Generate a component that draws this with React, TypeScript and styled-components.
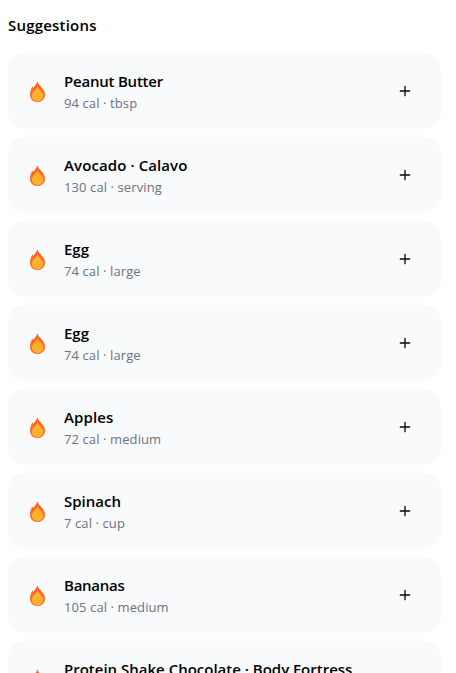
import React from "react";
import styled, { createGlobalStyle } from "styled-components";

const Global = createGlobalStyle`
  * { box-sizing: border-box; }
  html, body { margin: 0; height: 100%; overflow: hidden; background: #fff; }
  body { font-family: "Open Sans", "Noto Sans", sans-serif; color: #000; }
`;

const Page = styled.main`
  height: 673px;
  overflow: hidden;
  padding: 11px 15px 0 8px;
`;

const Heading = styled.h2`
  margin: 0 0 14px;
  font-size: 15px;
  line-height: 28px;
  font-weight: 600;
  letter-spacing: 0.2px;
`;

const List = styled.ul`
  list-style: none;
  margin: 0;
  padding: 0;
  display: flex;
  flex-direction: column;
  gap: 8px;
`;

const Card = styled.li`
  display: flex;
  align-items: center;
  height: 76px;
  flex: none;
  padding: 0 28px 0 20px;
  border-radius: 16px;
  background: #f9fafc;
`;

const Flame = styled.svg`
  width: 18px;
  height: 22px;
  margin-right: 18px;
  flex: none;
`;

const Info = styled.div`
  flex: 1;
  white-space: nowrap;
`;

const Name = styled.div<{ $tracking: number }>`
  font-size: 15px;
  line-height: 24px;
  font-weight: 600;
  letter-spacing: ${(p) => p.$tracking}px;
`;

const Detail = styled.div`
  font-size: 13px;
  line-height: 20px;
  color: #6b7280;
  letter-spacing: 0.1px;
`;

const AddButton = styled.button`
  display: flex;
  padding: 0;
  border: 0;
  background: none;
  color: #09090b;
`;

const foods: { name: string; detail: string; tracking?: number }[] = [
  { name: "Peanut Butter", detail: "94 cal · tbsp", tracking: -0.22 },
  { name: "Avocado · Calavo", detail: "130 cal · serving", tracking: 0.1 },
  { name: "Egg", detail: "74 cal · large" },
  { name: "Egg", detail: "74 cal · large" },
  { name: "Apples", detail: "72 cal · medium", tracking: 0.1 },
  { name: "Spinach", detail: "7 cal · cup" },
  { name: "Bananas", detail: "105 cal · medium", tracking: -0.25 },
  { name: "Protein Shake Chocolate · Body Fortress", detail: "100 cal · scoop" },
];

export default function App() {
  return (
    <Page>
      <Global />
      <Heading>Suggestions</Heading>
      <List>
        {foods.map(({ name, detail, tracking = 0 }, i) => (
          <Card key={i}>
            <Flame viewBox="0 0 18 22">
              <path fill="#ff6723" d="M9.8 1.8c.5 3 2.4 3.8 4.2 6.1 1.6 1.9 3 3.9 3 6.8 0 4.2-3.2 7.2-7.6 7.2s-7.4-3.1-7.4-7.2c0-3 1-5.1 1.8-7.3.2-.7.7-.7 1-.1l.8.6C6.1 5.6 8.4 4.7 9.2 1.9c.1-.5.5-.5.6-.1Z" />
              <path fill="#ffb02e" d="M9.8 7c.8 2.5 5.5 4.5 5.5 8.6 0 3.4-2.4 5.5-5.8 5.5s-5.8-2.1-5.8-5.5c0-4.1 4.7-5.6 5.5-8.6.1-.4.5-.4.6 0Z" />
            </Flame>
            <Info>
              <Name $tracking={tracking}>{name}</Name>
              <Detail>{detail}</Detail>
            </Info>
            <AddButton aria-label={`Add ${name}`}>
              <svg width="16" height="16" viewBox="0 0 24 24" fill="none" stroke="currentColor" strokeWidth="2" strokeLinecap="round">
                <path d="M5 12h14M12 5v14" />
              </svg>
            </AddButton>
          </Card>
        ))}
      </List>
    </Page>
  );
}
